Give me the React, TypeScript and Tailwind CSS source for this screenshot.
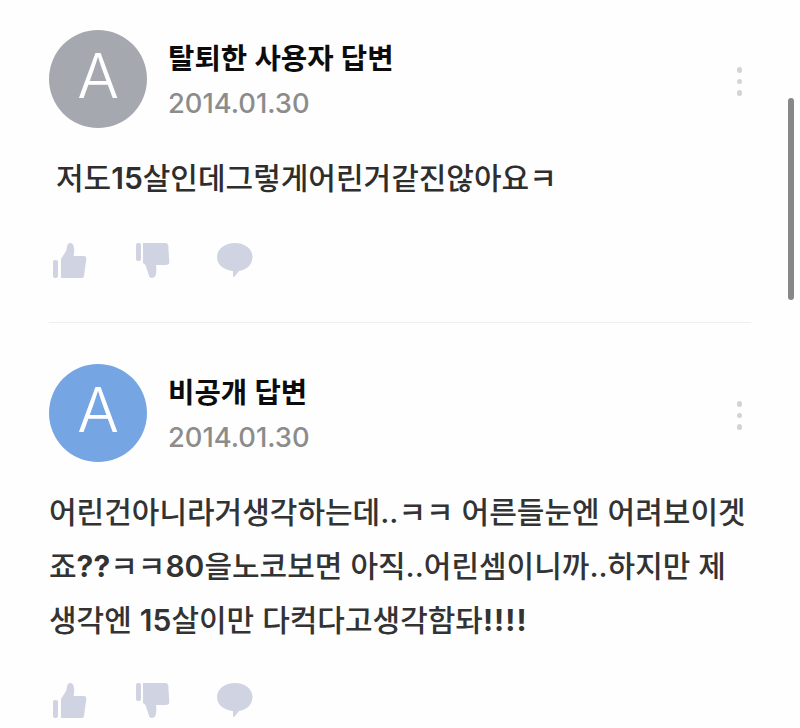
const ThumbUp = () => (
	<svg width="34" height="36" viewBox="0 0 34 36" fill="#d0d4e2">
		<rect x="0" y="17" width="5" height="18" rx="2" />
		<path d="M8 16 L13 8 C14 5 14 2 15 1 C17 -1 21 0 21 5 C21.500 8 21 11 20.500 13 L31 13 C33 13 33.500 14.500 33.300 16 L31 33 C30.800 34.500 30 35 28 35 L8 35 Z" />
	</svg>
);

const ThumbDown = () => (
	<svg width="34" height="36" viewBox="0 0 34 36" fill="#d0d4e2">
		<rect x="0" y="0" width="5" height="18" rx="2" />
		<path d="M7 0 L29 0 C31.500 0 32 1 32.300 3 L33.300 19 C33.500 21 32 22 30 22 L20 22 C20.500 25 20.500 28 20 31 C19.500 35 15 36 13.500 34 C12.500 32 12 29 11 27 L9.500 22 L7 20 Z" />
	</svg>
);

const Bubble = () => (
	<svg width="36" height="36" viewBox="0 0 36 36" fill="#d0d4e2">
		<path d="M18 0 C28 0 35.500 6 35.500 14 C35.500 22 29 27 22 28 L18 33 C17 34.500 16 34 16 32 L16 28 C7 27 0 22 0 14 C0 6 8 0 18 0 Z" />
	</svg>
);

const Answer = ({ name, date, avatar, children }: { name: string; date: string; avatar: string; children: React.ReactNode }) => (
	<div>
		<div className="flex items-start">
			<div className={`flex h-[98px] w-[98px] shrink-0 items-center justify-center rounded-full ${avatar}`}>
				<span className="mb-[6px] text-[62px] leading-none font-light text-white">A</span>
			</div>
			<div className="ml-[21px] flex-1 pt-[11px]">
				<div className="text-[28.700px] leading-9 font-semibold text-[#0c0c0c]">{name}</div>
				<div className="mt-[11px] text-[27.300px] leading-8 font-medium text-[#8c8c8c]">{date}</div>
			</div>
			<div className="mt-[37px] mr-[9px] flex flex-col gap-[6px]">
				<span className="h-[5.500px] w-[5.500px] rounded-full bg-[#d4d4d4]" />
				<span className="h-[5.500px] w-[5.500px] rounded-full bg-[#d4d4d4]" />
				<span className="h-[5.500px] w-[5.500px] rounded-full bg-[#d4d4d4]" />
			</div>
		</div>
		{children}
	</div>
);

const Actions = () => (
	<div className="flex pl-[4px]">
		<ThumbUp />
		<div className="ml-[49px]">
			<ThumbDown />
		</div>
		<div className="ml-[47px]">
			<Bubble />
		</div>
	</div>
);

export default function App() {
	return (
		<div className="relative h-[728px] w-[800px] overflow-hidden bg-[#fefefe] px-[49px] pt-[30px] font-['Inter','Noto_Sans_CJK_KR',sans-serif]">
			<Answer name="탈퇴한 사용자 답변" date="2014.01.30" avatar="bg-[#a5a8ae]">
				<p className="mt-[23px] pl-[7px] text-[30px] leading-[54px] font-medium text-[#2e2e2e]">
					저도<span className="font-semibold">15</span>살인데그렇게어린거같진않아요ㅋ
				</p>
				<div className="mt-[38px]">
					<Actions />
				</div>
			</Answer>
			<div className="mt-[43px] mb-[41px] w-[702px] border-t border-[#eeeeee]" />
			<Answer name="비공개 답변" date="2014.01.30" avatar="bg-[#75a6e3]">
				<p className="mt-[23px] text-[30px] leading-[54px] font-medium whitespace-nowrap text-[#333333]">
					어린건아니라거생각하는데..ㅋㅋ 어른들눈엔 어려보이겟
					<br />
					죠<span className="font-bold">??</span>ㅋㅋ<span className="font-semibold">80</span>을노코보면 아직..어린셈이니까..하지만 제
					<br />
					생각엔 <span className="font-semibold">15</span>살이만 다컥다고생각함돠<span className="font-bold tracking-[1px]">!!!!</span>
				</p>
				<div className="mt-[36px]">
					<Actions />
				</div>
			</Answer>
			{/* scroll thumb */}
			<div className="absolute top-[98px] right-[6px] h-[202px] w-[6px] rounded-full bg-[#888888]" />
		</div>
	);
}
